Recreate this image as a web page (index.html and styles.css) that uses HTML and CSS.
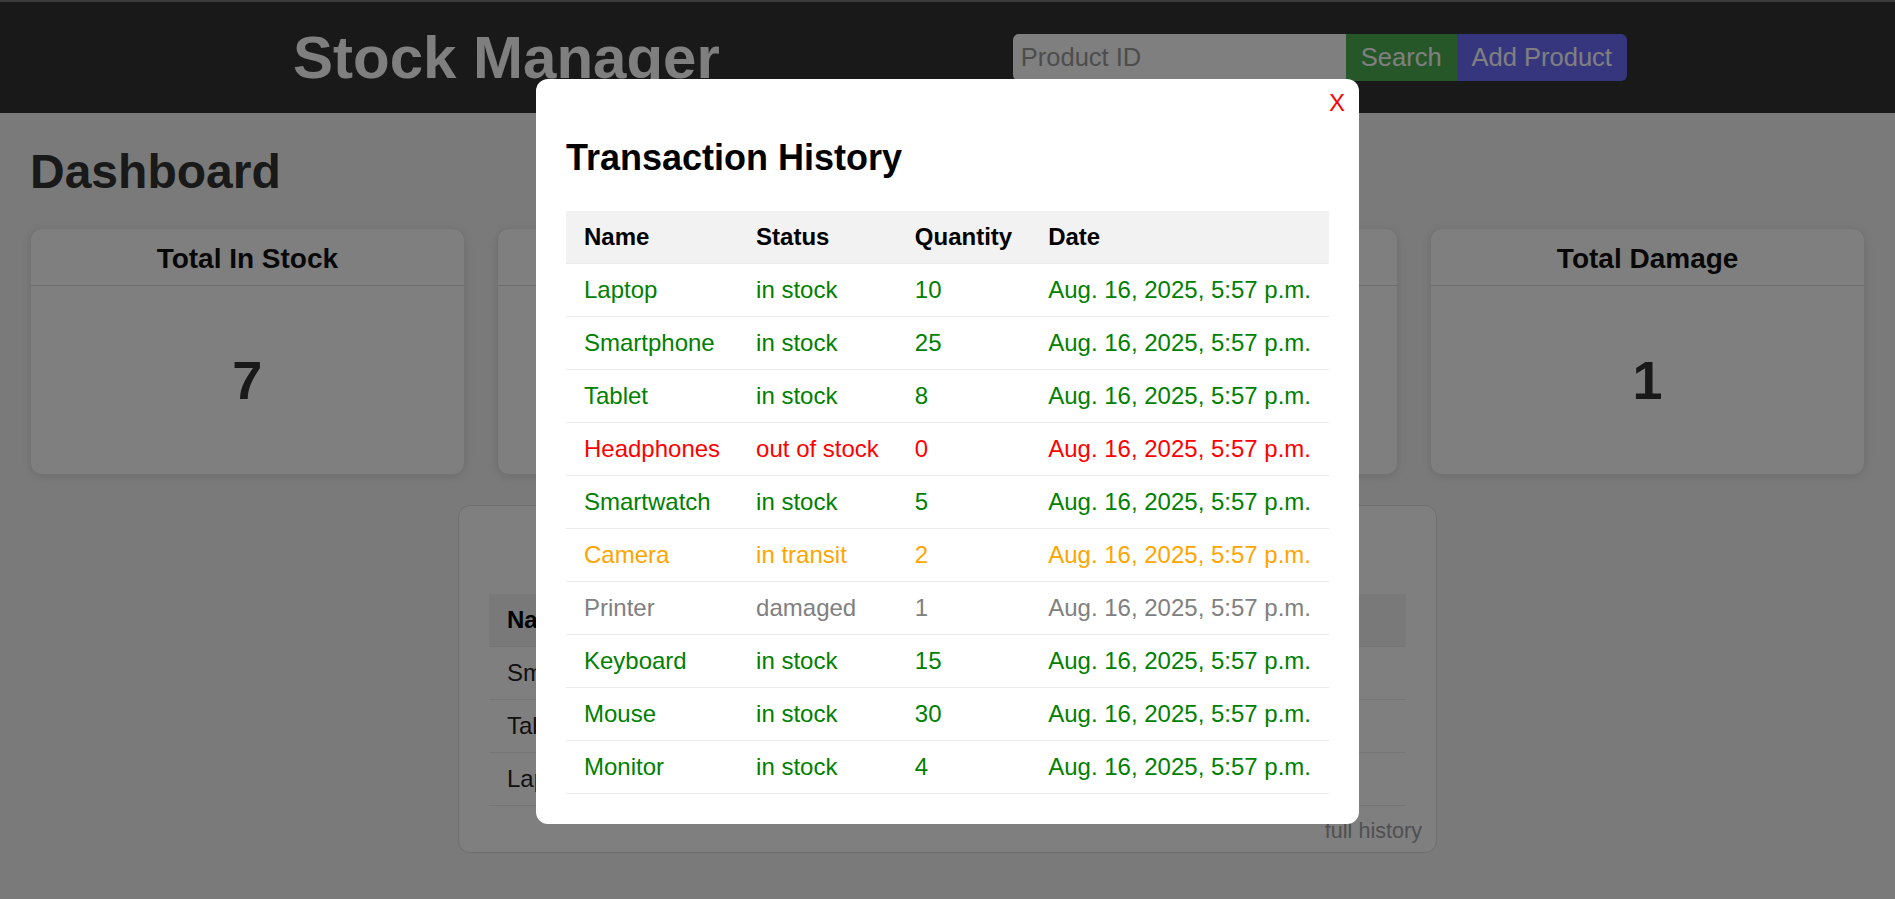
FILE: index.html
```html
<!DOCTYPE html>
<html lang="en">
<head>
<meta charset="utf-8">
<title>Stock Manager</title>
<link rel="stylesheet" href="styles.css">
</head>
<body>
<header class="topbar">
  <h1 class="brand">Stock Manager</h1>
  <form class="search">
    <input class="search-input" type="text" placeholder="Product ID">
    <button class="btn btn-search" type="button">Search</button>
    <button class="btn btn-add" type="button">Add Product</button>
  </form>
</header>

<main class="page">
  <h1 class="page-title">Dashboard</h1>
  <section class="cards">
    <div class="card">
      <h3 class="card-title">Total In Stock</h3>
      <div class="card-value">7</div>
    </div>
    <div class="card">
      <h3 class="card-title">Total Out of Stock</h3>
      <div class="card-value">1</div>
    </div>
    <div class="card">
      <h3 class="card-title">Total In Transit</h3>
      <div class="card-value">1</div>
    </div>
    <div class="card">
      <h3 class="card-title">Total Damage</h3>
      <div class="card-value">1</div>
    </div>
  </section>

  <section class="panel">
    <h3 class="panel-title">Recent Transactions</h3>
    <table class="grid plain">
      <thead>
        <tr><th>Name</th><th>Status</th><th>Quantity</th><th>Date</th></tr>
      </thead>
      <tbody>
        <tr><td>Smartphone</td><td>in stock</td><td>25</td><td>Aug. 16, 2025, 5:57 p.m.</td></tr>
        <tr><td>Tablet</td><td>in stock</td><td>8</td><td>Aug. 16, 2025, 5:57 p.m.</td></tr>
        <tr><td>Laptop</td><td>in stock</td><td>10</td><td>Aug. 16, 2025, 5:57 p.m.</td></tr>
      </tbody>
    </table>
    <div class="panel-foot"><a class="history-link" href="#">full history</a></div>
  </section>
</main>

<footer class="footer">© 2025 Stock Manager</footer>

<div class="overlay">
  <div class="modal">
    <span class="close">X</span>
    <h2 class="modal-title">Transaction History</h2>
    <table class="grid">
      <thead>
        <tr><th>Name</th><th>Status</th><th>Quantity</th><th>Date</th></tr>
      </thead>
      <tbody>
        <tr class="st-in"><td>Laptop</td><td>in stock</td><td>10</td><td>Aug. 16, 2025, 5:57 p.m.</td></tr>
        <tr class="st-in"><td>Smartphone</td><td>in stock</td><td>25</td><td>Aug. 16, 2025, 5:57 p.m.</td></tr>
        <tr class="st-in"><td>Tablet</td><td>in stock</td><td>8</td><td>Aug. 16, 2025, 5:57 p.m.</td></tr>
        <tr class="st-out"><td>Headphones</td><td>out of stock</td><td>0</td><td>Aug. 16, 2025, 5:57 p.m.</td></tr>
        <tr class="st-in"><td>Smartwatch</td><td>in stock</td><td>5</td><td>Aug. 16, 2025, 5:57 p.m.</td></tr>
        <tr class="st-transit"><td>Camera</td><td>in transit</td><td>2</td><td>Aug. 16, 2025, 5:57 p.m.</td></tr>
        <tr class="st-damaged"><td>Printer</td><td>damaged</td><td>1</td><td>Aug. 16, 2025, 5:57 p.m.</td></tr>
        <tr class="st-in"><td>Keyboard</td><td>in stock</td><td>15</td><td>Aug. 16, 2025, 5:57 p.m.</td></tr>
        <tr class="st-in"><td>Mouse</td><td>in stock</td><td>30</td><td>Aug. 16, 2025, 5:57 p.m.</td></tr>
        <tr class="st-in"><td>Monitor</td><td>in stock</td><td>4</td><td>Aug. 16, 2025, 5:57 p.m.</td></tr>
      </tbody>
    </table>
  </div>
</div>
</body>
</html>
```

FILE: styles.css
```css
* { box-sizing: border-box; }

body {
  margin: 0;
  background: #f4f4f4;
  color: #333;
  font-family: "Liberation Sans", Arial, sans-serif;
  font-size: 24px;
  overflow: hidden;
}

/* Header */
.topbar {
  display: flex;
  align-items: center;
  gap: 293px;
  height: 113px;
  padding-left: 293px;
  background: #333;
  border-top: 2px solid #777;
}
.brand {
  margin: 0;
  font-size: 60px;
  font-weight: bold;
  color: #fff;
  white-space: nowrap;
}
.search {
  display: flex;
  margin: 0;
}
.search-input {
  width: 333px;
  height: 47px;
  border: none;
  border-radius: 6px 0 0 6px;
  padding: 0 8px;
  font-family: inherit;
  font-size: 25.5px;
  background: #fff;
  color: #333;
  outline: none;
}
.search-input::placeholder { color: #9a9a9a; }
.btn {
  height: 47px;
  border: none;
  padding: 0 15px;
  font-family: inherit;
  font-size: 25.5px;
  color: #fff;
  cursor: pointer;
}
.btn-search { background: #4caf50; }
.btn-add { background: #6c6cff; border-radius: 0 6px 6px 0; }

/* Page */
.page { padding: 0 30px; }
.page-title {
  margin: 31px 0 29px;
  font-size: 48px;
  color: #333;
}
.cards {
  display: flex;
  gap: 32px;
}
.card {
  flex: 1;
  background: #fff;
  border: 1px solid #e6e6e6;
  border-radius: 12px;
  box-shadow: 0 2px 8px rgba(0, 0, 0, 0.1);
}
.card-title {
  margin: 0;
  padding: 14px 0 10px;
  text-align: center;
  font-size: 28px;
  color: #111;
  border-bottom: 1px solid #ddd;
}
.card-value {
  height: 188px;
  display: flex;
  align-items: center;
  justify-content: center;
  font-size: 54px;
  font-weight: bold;
  color: #333;
}

/* Panel */
.panel {
  width: 979px;
  margin: 30px auto 0;
  padding: 30px 30px 8px;
  background: #fff;
  border: 1px solid #ddd;
  border-radius: 12px;
}
.panel-title {
  margin: 0 0 26px;
  text-align: center;
  font-size: 28px;
  color: #111;
}
.panel-foot {
  margin: 12px -16px 0 0;
  text-align: right;
  font-size: 21.6px;
}
.history-link {
  color: #a0a0a0;
  text-decoration: none;
}

.footer {
  margin-top: 46px;
  padding: 20px;
  background: #333;
  color: #fff;
  text-align: center;
}

/* Tables */
.grid {
  border-collapse: collapse;
  font-size: 24px;
}
.grid.plain { width: 100%; }
.grid th,
.grid td {
  padding: 12px 18px;
  text-align: left;
  border-bottom: 1px solid #ebebeb;
  white-space: nowrap;
}
.grid th {
  background: #f2f2f2;
  color: #000;
  font-weight: bold;
}
.grid.plain td { color: #222; }

.st-in td { color: #008000; }
.st-out td { color: #ff0000; }
.st-transit td { color: #ffa500; }
.st-damaged td { color: #808080; }

/* Modal */
.overlay {
  position: fixed;
  inset: 0;
  padding-top: 3px;
  background: rgba(0, 0, 0, 0.5);
  display: flex;
  align-items: center;
  justify-content: center;
}
.modal {
  position: relative;
  background: #fff;
  border-radius: 12px;
  padding: 30px;
}
.close {
  position: absolute;
  top: 10px;
  right: 14px;
  color: #ff0000;
  font-size: 24px;
  cursor: pointer;
}
.modal-title {
  margin: 28px 0 32px;
  font-size: 36px;
  color: #000;
}
```
